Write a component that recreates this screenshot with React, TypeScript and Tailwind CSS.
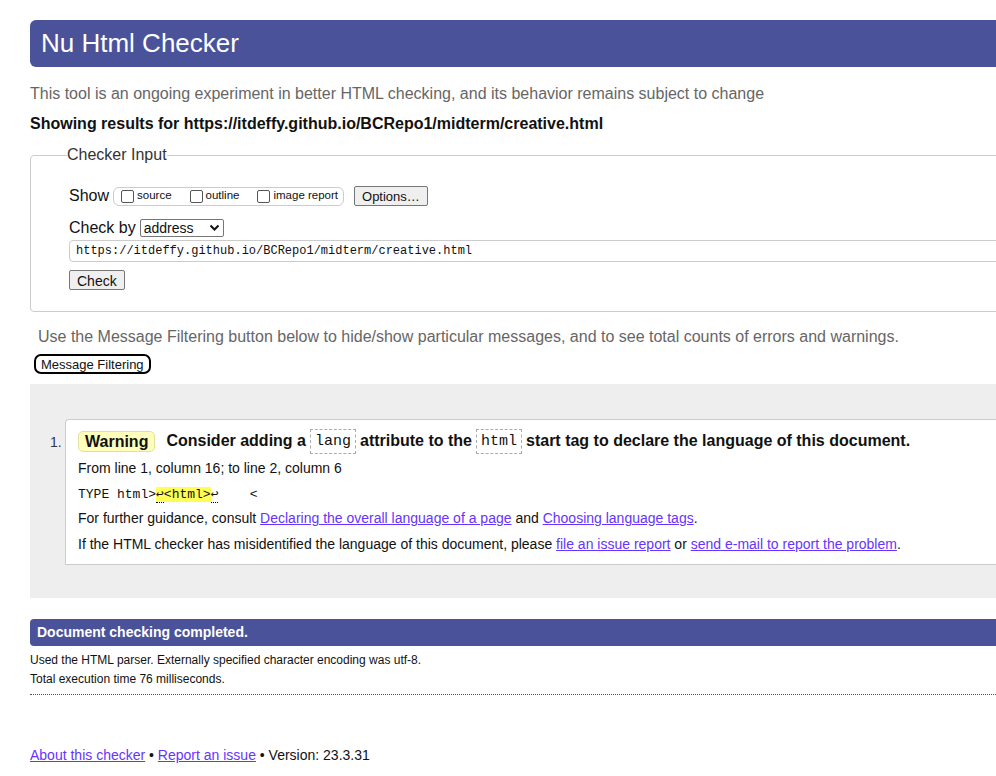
export default function App() {
  const link = "text-[#6633ff] underline";
  const code = "font-['Liberation_Mono','DejaVu_Sans_Mono',monospace]";
  const box = "w-[13px] h-[13px] border border-[#555] rounded-[2px] inline-block";
  return (
    <div className="w-[996px] h-[776px] overflow-hidden bg-white font-['Liberation_Sans',Arial,sans-serif] text-[#111]">
      <div className="ml-[30px] w-[1000px] pt-[20px]">
        <h1 className="h-[47px] bg-[#4a529a] rounded-l-[6px] text-white text-[26px] leading-[47px] pl-[11px]">
          Nu Html Checker
        </h1>
        <p className="mt-[18px] text-[16px] text-[#666] leading-[18px]">
          This tool is an ongoing experiment in better HTML checking, and its behavior remains subject to change
        </p>
        <p className="mt-[12px] text-[16px] font-bold leading-[18px]">
          Showing results for https://itdeffy.github.io/BCRepo1/midterm/creative.html
        </p>

        <fieldset className="mt-[10px] border border-[#ccc] rounded-l-[4px] pl-[38px] pb-[20px] h-[169px]">
          <legend className="-ml-[2px] px-0 text-[16px] text-[#333]">Checker Input</legend>
          <div className="flex items-center mt-[18px] h-[22px]">
            <span className="text-[16px] mr-[4px]">Show</span>
            <span className="flex items-center h-[19px] border border-[#ccc] rounded-[6px] pl-[7px] pr-[5px] text-[11.5px] gap-[18px] mr-[10px]">
              <label className="flex items-center gap-[3px]"><span className={box} />source</label>
              <label className="flex items-center gap-[3px]"><span className={box} />outline</label>
              <label className="flex items-center gap-[3px]"><span className={box} />image report</label>
            </span>
            <button className="h-[20px] px-[7px] text-[13px] bg-[#efefef] border border-[#767676] rounded-[2px]">Options…</button>
          </div>
          <div className="flex items-center mt-[11px] h-[20px]">
            <span className="text-[16px] mr-[4px]">Check by</span>
            <span className="w-[84px] h-[18px] border border-[#767676] rounded-[2px] flex items-center justify-between px-[3px] text-[14px]">
              address
              <svg width="11" height="8" viewBox="0 0 11 8"><path d="M1.5 1.5 L5.5 5.5 L9.5 1.5" stroke="#111" strokeWidth="2" fill="none" /></svg>
            </span>
          </div>
          <div className={`mt-[2px] h-[22px] border border-[#ccc] rounded-l-[4px] flex items-center pl-[6px] text-[12px] ${code}`}>
            https://itdeffy.github.io/BCRepo1/midterm/creative.html
          </div>
          <button className="mt-[8px] h-[20px] px-[7px] text-[14px] bg-[#efefef] border border-[#767676] rounded-[2px] block">Check</button>
        </fieldset>

        <p className="mt-[16px] ml-[8px] text-[16px] text-[#666] leading-[18px]">
          Use the Message Filtering button below to hide/show particular messages, and to see total counts of errors and warnings.
        </p>
        <button className="block mt-[8px] ml-[4px] h-[20px] px-[5px] text-[13px] leading-[15px] border-2 border-black rounded-[7px] bg-white">Message Filtering</button>

        <div className="mt-[10px] bg-[#eee] h-[214px] pt-[35px] pl-[20px] flex">
          <span className="w-[15px] text-[14px] text-[#335] mt-[13px]">1.</span>
          <div className="bg-white border border-[#ccc] border-r-0 rounded-tl-[4px] flex-1 h-[146px] pl-[12px] pt-[9px]">
            <p className="flex items-center text-[16px] font-bold h-[24px]">
              <span className="bg-[#ffffbb] border border-[#e0e0a0] rounded-[5px] px-[6px] h-[21px] leading-[19px] mr-[11px]">Warning</span>
              Consider adding a
              <code className={`mx-[4px] border border-dashed border-[#aaa] px-[4px] h-[25px] leading-[23px] font-normal text-[15px] ${code}`}>lang</code>
              attribute to the
              <code className={`mx-[4px] border border-dashed border-[#aaa] px-[4px] h-[25px] leading-[23px] font-normal text-[15px] ${code}`}>html</code>
              start tag to declare the language of this document.
            </p>
            <p className="mt-[6px] text-[14px] leading-[18px]">From line 1, column 16; to line 2, column 6</p>
            <p className={`mt-[9px] text-[13px] leading-[18px] whitespace-pre ${code}`}>
              TYPE html&gt;<span className="bg-[#ffff55]"><span className="border-b border-dotted border-black">↩</span>&lt;html&gt;</span><span className="border-b border-dotted border-black">↩</span>{"    <"}
            </p>
            <p className="mt-[5px] text-[14px] leading-[18px]">
              For further guidance, consult <a className={link}>Declaring the overall language of a page</a> and <a className={link}>Choosing language tags</a>.
            </p>
            <p className="mt-[8px] text-[14px] leading-[18px]">
              If the HTML checker has misidentified the language of this document, please <a className={link}>file an issue report</a> or <a className={link}>send e-mail to report the problem</a>.
            </p>
          </div>
        </div>

        <div className="mt-[21px] h-[27px] bg-[#4a529a] rounded-l-[4px] text-white text-[14px] font-bold leading-[27px] pl-[7px]">
          Document checking completed.
        </div>
        <p className="mt-[6px] text-[12px] leading-[16px]">Used the HTML parser. Externally specified character encoding was utf-8.</p>
        <p className="mt-[3px] text-[12px] leading-[16px]">Total execution time 76 milliseconds.</p>
        <div className="mt-[7px] border-t border-dotted border-[#555]" />

        <p className="mt-[51px] text-[14px] leading-[18px]">
          <a className={link}>About this checker</a> • <a className={link}>Report an issue</a> • Version: 23.3.31
        </p>
      </div>
    </div>
  );
}
